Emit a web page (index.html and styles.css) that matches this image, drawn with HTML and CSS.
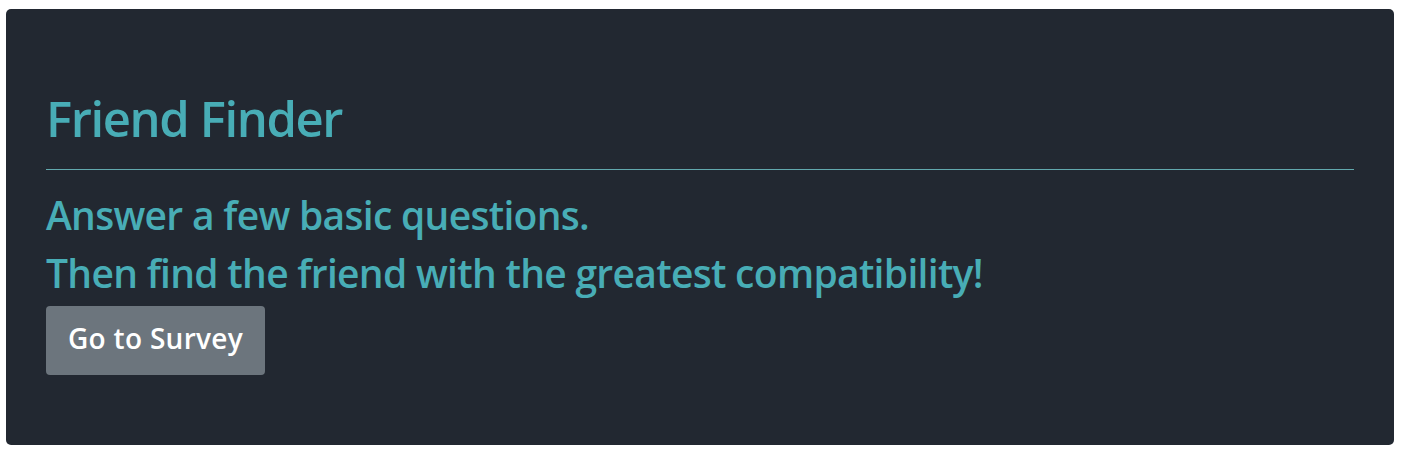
FILE: index.html
```html
<!DOCTYPE html>
<html lang="en">
<head>
<meta charset="utf-8">
<title>Friend Finder</title>
<link rel="stylesheet" href="styles.css">
</head>
<body>
<main class="jumbotron">
  <h1 class="title">Friend Finder</h1>
  <hr class="rule">
  <h2 class="lead">Answer a few basic questions.</h2>
  <h2 class="lead">Then find the friend with the greatest compatibility!</h2>
  <a class="btn" href="#">Go to Survey</a>
</main>
</body>
</html>
```
FILE: styles.css
```css
html, body {
  margin: 0;
  padding: 0;
  background: #ffffff;
}
body {
  padding: 9px 9px 10px 6px;
  font-family: "Open Sans", "Noto Sans", sans-serif;
}
.jumbotron {
  background: #222831;
  border-radius: 5px;
  padding: 79px 40px 70px 40px;
  height: 287px;
}
.title {
  margin: 0;
  color: #48adb6;
  font-size: 49px;
  font-weight: 600;
  letter-spacing: -1.4px;
  line-height: 61px;
}
.rule {
  margin: 20px 0 21px 0;
  border: 0;
  border-top: 1px solid #62a9ae;
  height: 0;
}
.lead {
  margin: 0 0 9.5px 0;
  color: #48adb6;
  font-size: 39px;
  font-weight: 600;
  letter-spacing: -0.7px;
  line-height: 48px;
}
.btn {
  display: inline-flex;
  align-items: center;
  justify-content: center;
  box-sizing: border-box;
  height: 69px;
  width: 219px;
  padding-bottom: 6px;
  background: #6c757d;
  color: #ffffff;
  border-radius: 4px;
  text-decoration: none;
  font-size: 28px;
  font-weight: 600;
  letter-spacing: 0.3px;
}
```
